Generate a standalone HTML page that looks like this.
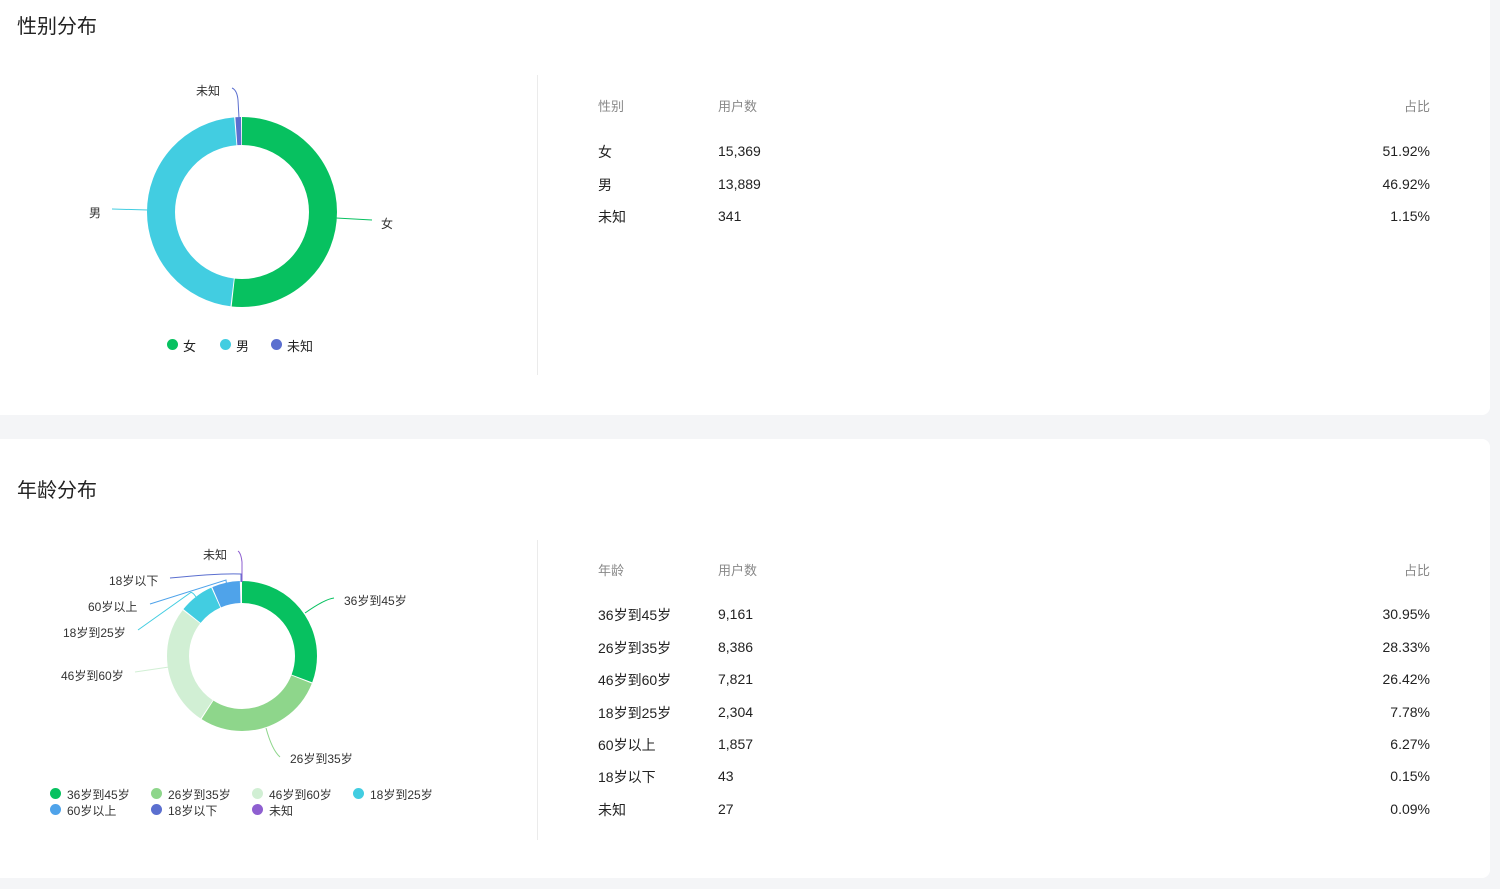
<!DOCTYPE html>
<html><head><meta charset="utf-8"><style>
*{margin:0;padding:0;box-sizing:border-box}
body{width:1500px;height:889px;background:#f4f5f7;font-family:"Liberation Sans","Noto Sans CJK SC",sans-serif;color:#222;position:relative;overflow:hidden}
.card{position:absolute;left:0;width:1490px;background:#fff;border-radius:0 0 8px 0}
.t{position:absolute;white-space:nowrap}
.title{font-size:20px;color:#222}
.hd{font-size:13px;color:#888}
.c{font-size:14px;color:#222}
.n{margin-top:1px}
.r{text-align:right;width:120px}
.vl{position:absolute;left:537px;width:1px;background:#ebebeb}
.lg{font-size:13px}
.dot{position:absolute;width:11px;height:11px;border-radius:50%}
.sm{font-size:12px;color:#333}
</style></head><body>
<div class="card" style="top:0;height:415px"></div>
<div class="card" style="top:439px;height:439px;border-radius:0 8px 8px 0"></div>

<div class="t title" style="left:17px;top:10px">性别分布</div>
<div class="t title" style="left:17px;top:474px">年龄分布</div>
<div class="vl" style="top:75px;height:300px"></div>
<div class="vl" style="top:540px;height:300px"></div>

<svg style="position:absolute;left:0;top:0" width="540" height="889">
<g transform="rotate(-90 242 212)" fill="none" stroke-width="28">
<circle cx="242" cy="212" r="81" stroke="#07c160" stroke-dasharray="263.2 245.74"/>
<circle cx="242" cy="212" r="81" stroke="#42cde1" stroke-dasharray="237.8 271.14" stroke-dashoffset="-264.24"/>
<circle cx="242" cy="212" r="81" stroke="#5b6fcf" stroke-dasharray="4.85 504.1" stroke-dashoffset="-503.04"/>
</g>
<g fill="none" stroke-width="1">
<path d="M336 218 L372 220" stroke="#07c160"/>
<path d="M148 210 L112 209" stroke="#42cde1"/>
<path d="M239 118 L238 100 Q237 90 232 88" stroke="#5b6fcf"/>
</g>
<text x="381" y="228" font-size="12" fill="#333">女</text>
<text x="89" y="217" font-size="12" fill="#333">男</text>
<text x="196" y="95" font-size="12" fill="#333">未知</text>

<g transform="rotate(-90 242 656)" fill="none" stroke-width="22">
<circle cx="242" cy="656" r="64" stroke="#07c160" stroke-dasharray="123.46 278.66"/>
<circle cx="242" cy="656" r="64" stroke="#8ed68b" stroke-dasharray="112.92 289.2" stroke-dashoffset="-124.46"/>
<circle cx="242" cy="656" r="64" stroke="#d1efd4" stroke-dasharray="105.24 296.88" stroke-dashoffset="-238.38"/>
<circle cx="242" cy="656" r="64" stroke="#42cde1" stroke-dasharray="30.28 371.84" stroke-dashoffset="-344.62"/>
<circle cx="242" cy="656" r="64" stroke="#4fa3ea" stroke-dasharray="24.21 377.91" stroke-dashoffset="-375.9"/>
</g>
<g fill="none" stroke-width="1">
<path d="M305 613 Q325 599 334 598" stroke="#07c160"/>
<path d="M266 728 Q272 750 280 757" stroke="#8ed68b"/>
<path d="M169 667 L135 672" stroke="#d1efd4"/>
<path d="M196 597 Q192 591 190 593 L138 630" stroke="#42cde1"/>
<path d="M227 589 L226 580 L150 604" stroke="#4fa3ea"/>
<path d="M241 582 L241 574 Q220 573 170 578" stroke="#5b6fcf"/>
<path d="M242 582 L242 562 Q241 553 238 551" stroke="#8e5fd0"/>
</g>
<g font-size="12" fill="#333">
<text x="344" y="605">36岁到45岁</text>
<text x="290" y="763">26岁到35岁</text>
<text x="61" y="680">46岁到60岁</text>
<text x="63" y="637">18岁到25岁</text>
<text x="88" y="611">60岁以上</text>
<text x="109" y="585">18岁以下</text>
<text x="203" y="559">未知</text>
</g>
</svg>

<div class="dot" style="left:167px;top:339px;background:#07c160"></div><div class="t lg" style="left:183px;top:336px">女</div>
<div class="dot" style="left:220px;top:339px;background:#42cde1"></div><div class="t lg" style="left:236px;top:336px">男</div>
<div class="dot" style="left:271px;top:339px;background:#5b6fcf"></div><div class="t lg" style="left:287px;top:336px">未知</div>

<div class="dot" style="left:50px;top:788px;background:#07c160"></div><div class="t sm" style="left:67px;top:786px">36岁到45岁</div>
<div class="dot" style="left:151px;top:788px;background:#8ed68b"></div><div class="t sm" style="left:168px;top:786px">26岁到35岁</div>
<div class="dot" style="left:252px;top:788px;background:#d1efd4"></div><div class="t sm" style="left:269px;top:786px">46岁到60岁</div>
<div class="dot" style="left:353px;top:788px;background:#42cde1"></div><div class="t sm" style="left:370px;top:786px">18岁到25岁</div>
<div class="dot" style="left:50px;top:804px;background:#4fa3ea"></div><div class="t sm" style="left:67px;top:802px">60岁以上</div>
<div class="dot" style="left:151px;top:804px;background:#5b6fcf"></div><div class="t sm" style="left:168px;top:802px">18岁以下</div>
<div class="dot" style="left:252px;top:804px;background:#8e5fd0"></div><div class="t sm" style="left:269px;top:802px">未知</div>

<div class="t hd" style="left:598px;top:96px">性别</div>
<div class="t hd" style="left:718px;top:96px">用户数</div>
<div class="t hd r" style="left:1310px;top:96px">占比</div>
<div class="t c" style="left:598px;top:142px">女</div><div class="t c n" style="left:718px;top:142px">15,369</div><div class="t c r n" style="left:1310px;top:142px">51.92%</div>
<div class="t c" style="left:598px;top:175px">男</div><div class="t c n" style="left:718px;top:175px">13,889</div><div class="t c r n" style="left:1310px;top:175px">46.92%</div>
<div class="t c" style="left:598px;top:207px">未知</div><div class="t c n" style="left:718px;top:207px">341</div><div class="t c r n" style="left:1310px;top:207px">1.15%</div>

<div class="t hd" style="left:598px;top:560px">年龄</div>
<div class="t hd" style="left:718px;top:560px">用户数</div>
<div class="t hd r" style="left:1310px;top:560px">占比</div>
<div class="t c" style="left:598px;top:605px">36岁到45岁</div><div class="t c n" style="left:718px;top:605px">9,161</div><div class="t c r n" style="left:1310px;top:605px">30.95%</div>
<div class="t c" style="left:598px;top:638px">26岁到35岁</div><div class="t c n" style="left:718px;top:638px">8,386</div><div class="t c r n" style="left:1310px;top:638px">28.33%</div>
<div class="t c" style="left:598px;top:670px">46岁到60岁</div><div class="t c n" style="left:718px;top:670px">7,821</div><div class="t c r n" style="left:1310px;top:670px">26.42%</div>
<div class="t c" style="left:598px;top:703px">18岁到25岁</div><div class="t c n" style="left:718px;top:703px">2,304</div><div class="t c r n" style="left:1310px;top:703px">7.78%</div>
<div class="t c" style="left:598px;top:735px">60岁以上</div><div class="t c n" style="left:718px;top:735px">1,857</div><div class="t c r n" style="left:1310px;top:735px">6.27%</div>
<div class="t c" style="left:598px;top:767px">18岁以下</div><div class="t c n" style="left:718px;top:767px">43</div><div class="t c r n" style="left:1310px;top:767px">0.15%</div>
<div class="t c" style="left:598px;top:800px">未知</div><div class="t c n" style="left:718px;top:800px">27</div><div class="t c r n" style="left:1310px;top:800px">0.09%</div>
</body></html>
